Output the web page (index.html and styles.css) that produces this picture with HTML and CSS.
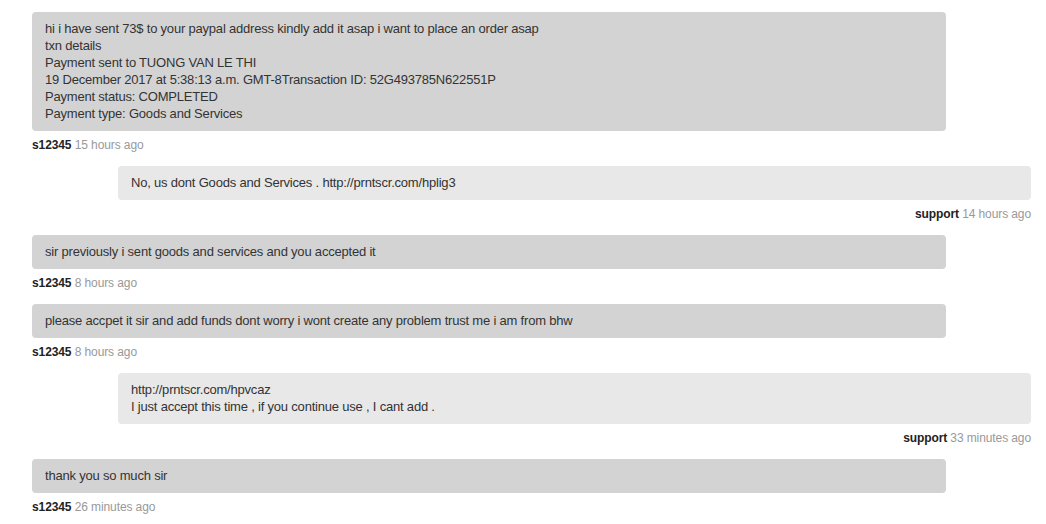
FILE: index.html
```html
<!DOCTYPE html>
<html>
<head>
<meta charset="utf-8">
<link rel="stylesheet" href="styles.css">
</head>
<body>
<div class="thread">
  <div class="msg user">
    <div class="bubble">hi i have sent 73$ to your paypal address kindly add it asap i want to place an order asap<br>txn details<br>Payment sent to TUONG VAN LE THI<br>19 December 2017 at 5:38:13 a.m. GMT-8Transaction ID: 52G493785N622551P<br>Payment status: COMPLETED<br>Payment type: Goods and Services</div>
    <div class="meta"><b>s12345</b> <span class="time">15 hours ago</span></div>
  </div>
  <div class="msg support">
    <div class="bubble">No, us dont Goods and Services . http://prntscr.com/hplig3</div>
    <div class="meta"><b>support</b> <span class="time">14 hours ago</span></div>
  </div>
  <div class="msg user">
    <div class="bubble">sir previously i sent goods and services and you accepted it</div>
    <div class="meta"><b>s12345</b> <span class="time">8 hours ago</span></div>
  </div>
  <div class="msg user">
    <div class="bubble">please accpet it sir and add funds dont worry i wont create any problem trust me i am from bhw</div>
    <div class="meta"><b>s12345</b> <span class="time">8 hours ago</span></div>
  </div>
  <div class="msg support">
    <div class="bubble">http://prntscr.com/hpvcaz<br>I just accept this time , if you continue use , I cant add .</div>
    <div class="meta"><b>support</b> <span class="time">33 minutes ago</span></div>
  </div>
  <div class="msg user">
    <div class="bubble">thank you so much sir</div>
    <div class="meta"><b>s12345</b> <span class="time">26 minutes ago</span></div>
  </div>
</div>
</body>
</html>
```
FILE: styles.css
```css
html, body {
  margin: 0;
  padding: 0;
  background: #ffffff;
}
body {
  font-family: "Liberation Sans", Arial, sans-serif;
  color: #333333;
}
.thread {
  padding: 12px 15px 0 32px;
  display: flex;
  flex-direction: column;
}
.msg {
  display: flex;
  flex-direction: column;
  margin-bottom: 12px;
}
.bubble {
  font-size: 13px;
  letter-spacing: -0.2px;
  line-height: 17px;
  padding: 8px 13px 9px 13px;
  border-radius: 4px;
  margin-bottom: 6px;
}
.user .bubble {
  background: #d3d3d3;
  margin-right: 85px;
}
.support .bubble {
  background: #e8e8e8;
  margin-left: 86px;
}
.meta {
  font-size: 12px;
  letter-spacing: -0.1px;
  line-height: 17px;
  color: #222222;
}
.support .meta {
  text-align: right;
}
.meta b {
  font-weight: bold;
}
.time {
  color: #999999;
}
```
